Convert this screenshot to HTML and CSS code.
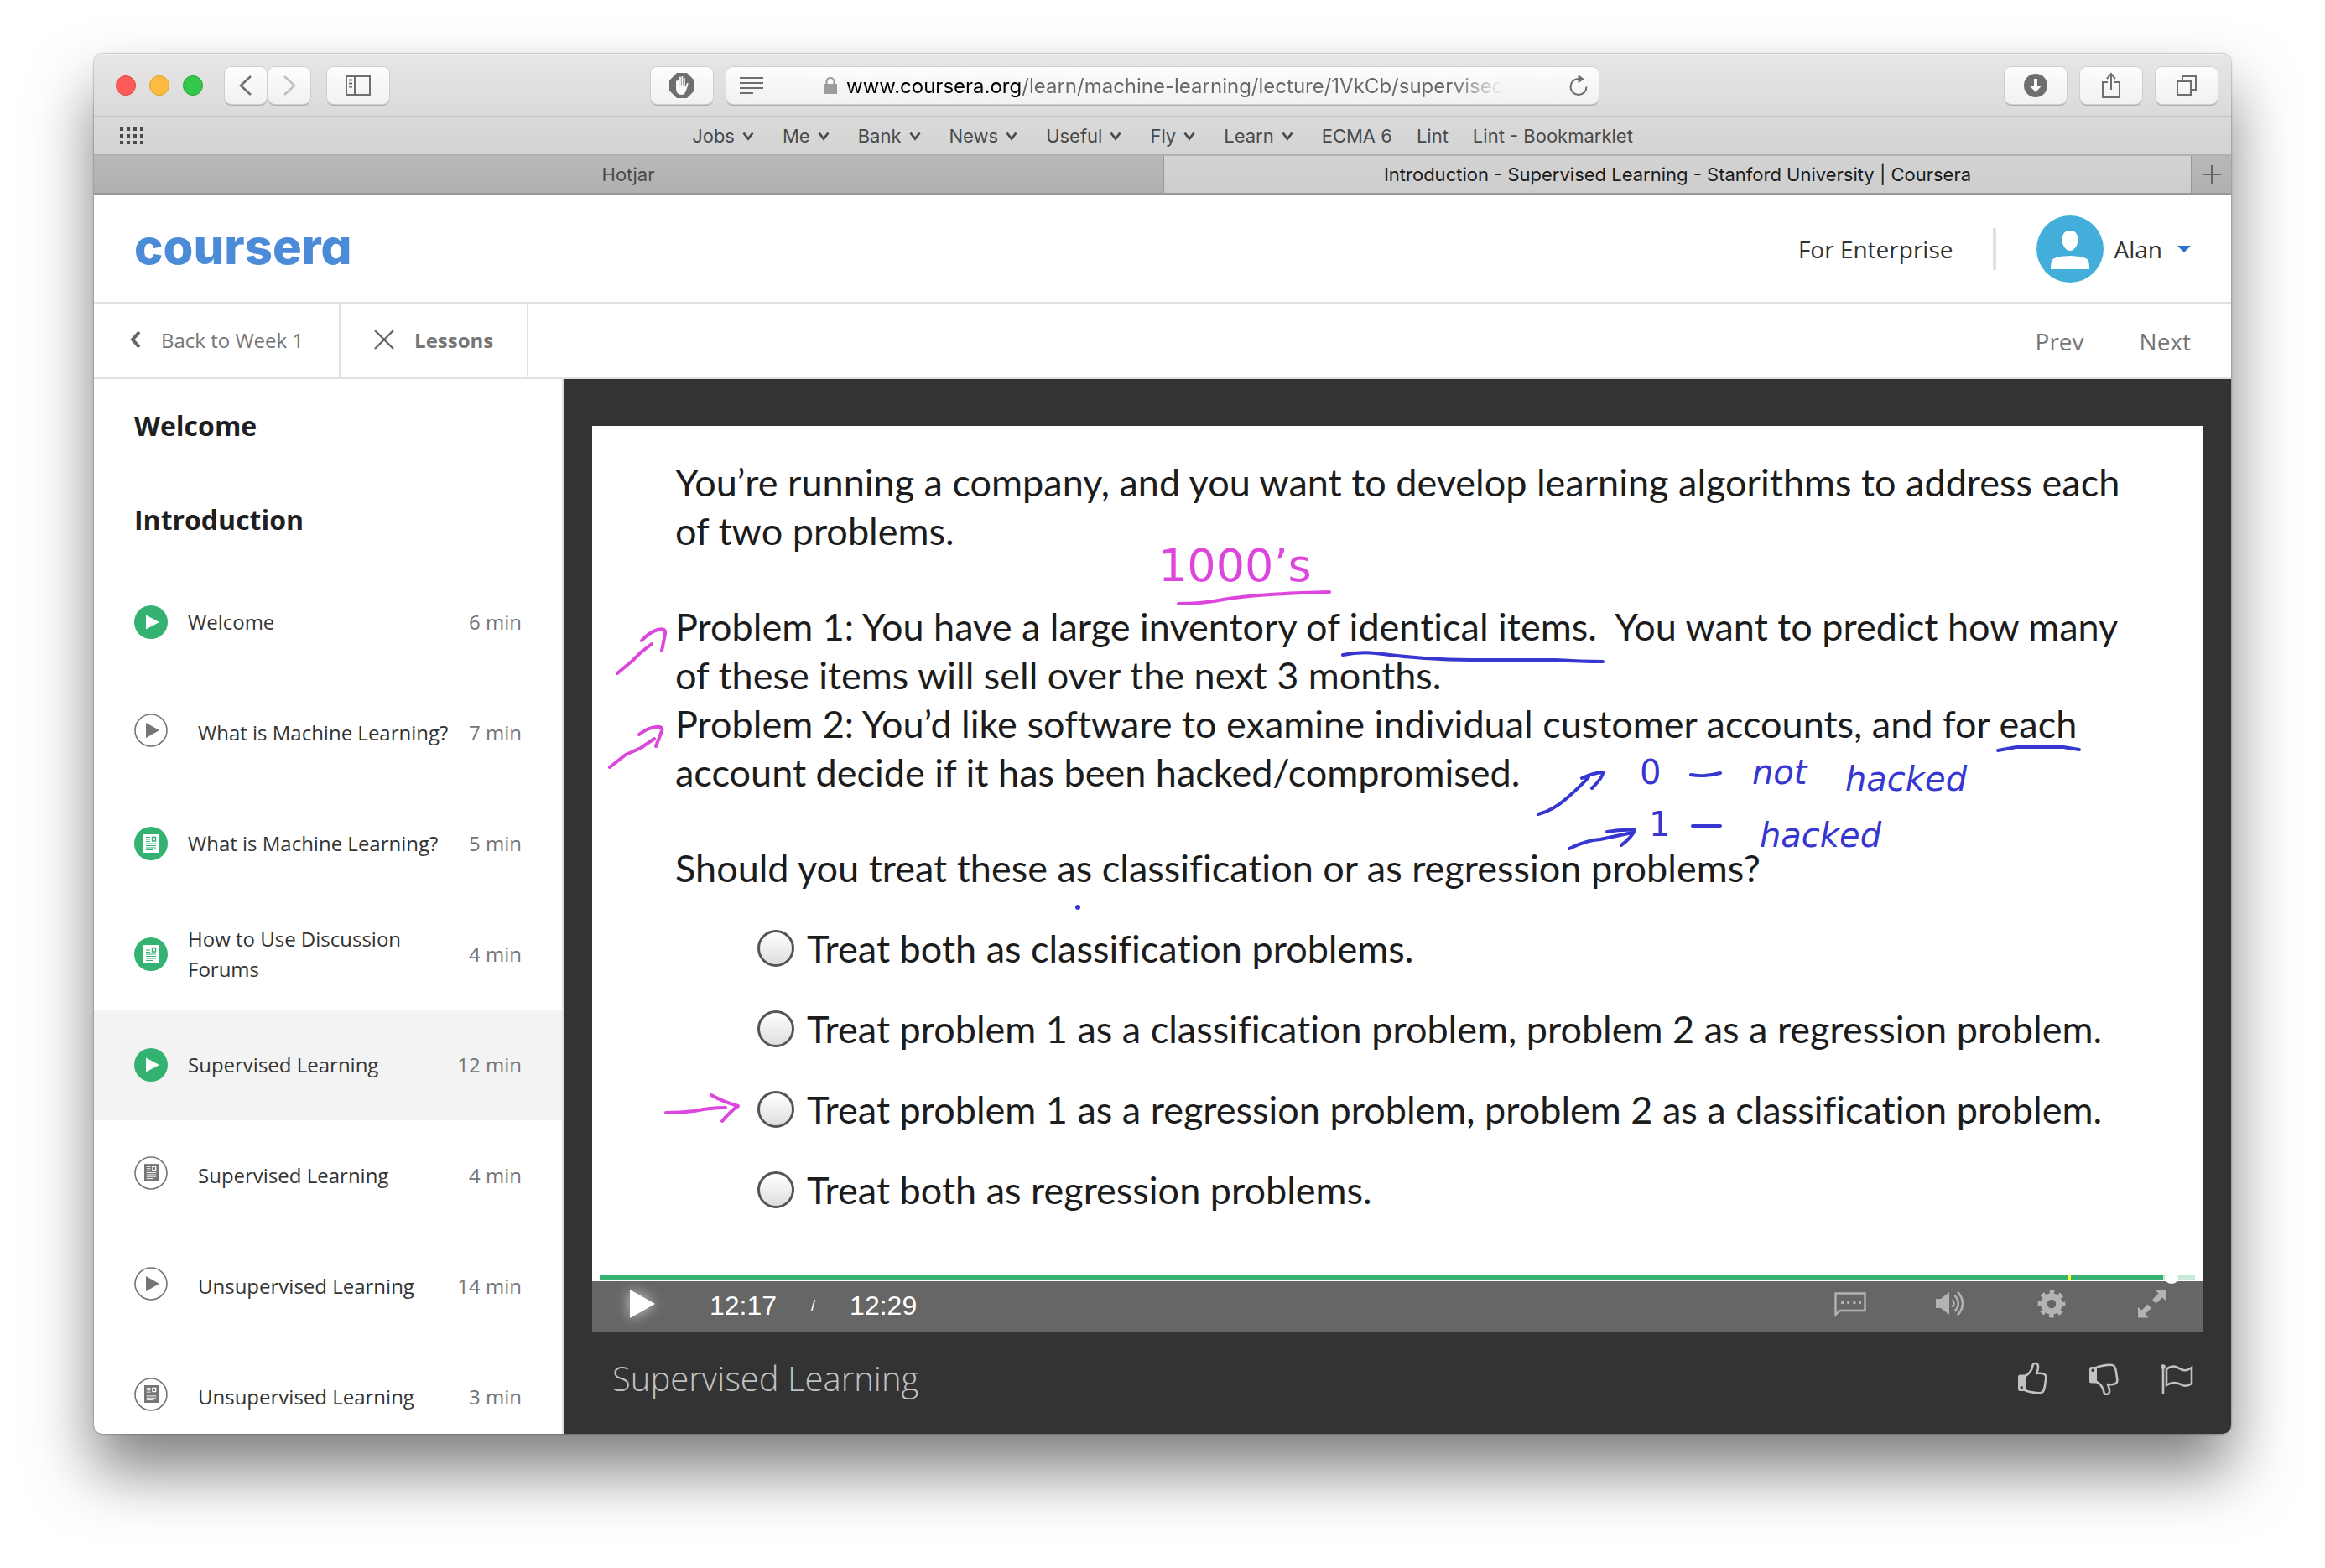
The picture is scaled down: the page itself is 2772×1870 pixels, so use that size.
FILE: index.html
```html
<!DOCTYPE html>
<html lang="en">
<head>
<meta charset="utf-8">
<meta name="viewport" content="width=device-width, initial-scale=1">
<title>Introduction - Supervised Learning - Stanford University | Coursera</title>
<link rel="stylesheet" href="styles.css">
</head>
<body>
<svg class="sprite" aria-hidden="true">
  <symbol id="chev" viewBox="0 0 14 12"><path d="M1.500 2.500L7 9.500L12.500 2.500" fill="none" stroke="currentColor" stroke-width="2.800"/></symbol>
  <symbol id="play-on" viewBox="0 0 40 40"><circle cx="20" cy="20" r="20" fill="#33b272"/><path d="M14 11.500L30 20L14 28.500z" fill="#fff"/></symbol>
  <symbol id="play-off" viewBox="0 0 40 40"><circle cx="20" cy="20" r="19" fill="none" stroke="#757575" stroke-width="1.600"/><path d="M14 11L30 20L14 29z" fill="#757575"/></symbol>
  <symbol id="page" viewBox="0 0 18 22">
    <path d="M0 0h18v22H0z" fill="currentColor"/>
    <path d="M3 3.500h5M3 6h5M3 8.500h5M3 11h12M3 13.500h12M3 16h12M3 18.500h9" stroke="var(--line)" stroke-width="1"/>
    <path d="M10.500 3.500h4v4.500h-4z" fill="none" stroke="var(--line)" stroke-width="1.400"/>
  </symbol>
  <symbol id="read-on" viewBox="0 0 40 40"><circle cx="20" cy="20" r="20" fill="#33b272"/><use href="#page" class="page-on" x="11" y="9" width="18" height="22"/></symbol>
  <symbol id="read-off" viewBox="0 0 40 40"><circle cx="20" cy="20" r="19" fill="none" stroke="#757575" stroke-width="1.600"/><use href="#page" class="page-off" x="12" y="9" width="17" height="21"/></symbol>
</svg>

<div class="window">
  <header class="toolbar">
    <div class="toolbar-left">
      <div class="lights">
        <button class="light close" aria-label="Close"></button>
        <button class="light minimise" aria-label="Minimise"></button>
        <button class="light zoom" aria-label="Zoom"></button>
      </div>
      <div class="history">
        <button class="tool narrow" aria-label="Back"><svg width="16" height="24" viewBox="0 0 16 24"><path d="M14 1L2 12L14 23" fill="none" stroke="#6e6e6e" stroke-width="2.600"/></svg></button>
        <button class="tool narrow" aria-label="Forward"><svg width="16" height="24" viewBox="0 0 16 24"><path d="M2 1L14 12L2 23" fill="none" stroke="#c0c0c0" stroke-width="2.600"/></svg></button>
      </div>
      <button class="tool" aria-label="Sidebar"><svg width="30" height="24" viewBox="0 0 30 24"><path d="M1 1h28v22H1zM11 1v22" fill="none" stroke="#6e6e6e" stroke-width="2"/><path d="M4 5.500h4M4 9.500h4M4 13.500h4" stroke="#6e6e6e" stroke-width="1.800"/></svg></button>
      <button class="tool blocker" aria-label="Content blocker"><svg width="30" height="30" viewBox="0 0 30 30"><path d="M9 0h12l9 9v12l-9 9H9l-9-9V9z" fill="#6e6e6e"/><path d="M9 9.500V18c0 5 2.500 8 6.500 8c3 0 4.500-2 5.500-5l2.500-7.500c.4-1.500-1.200-2-1.900-.6L19.800 17V7c0-1.200-1.600-1.200-1.700 0v7.500h-.7V5c0-1.300-1.800-1.300-1.800 0v9.500h-.7V5.500c0-1.300-1.800-1.300-1.800 0v9.500h-.7V9.500c0-1.200-1.700-1.200-1.700 0z" transform="translate(-1)" fill="#fafafa"/></svg></button>
    </div>
    <div class="address">
      <svg width="28" height="20" viewBox="0 0 28 20"><path d="M0 1h28M0 7h28M0 13h28M0 19h16" stroke="#6e6e6e" stroke-width="2"/></svg>
      <svg class="lock" width="18" height="20" viewBox="0 0 18 20"><path d="M1 8h16v12H1z" fill="#9c9c9c"/><path d="M4.500 9V5.500a4.500 4.500 0 0 1 9 0V9" fill="none" stroke="#9c9c9c" stroke-width="2.200"/></svg>
      <input class="url" type="text" aria-label="Address" value="www.coursera.org/learn/machine-learning/lecture/1VkCb/supervised-learning">
      <button class="plain" aria-label="Reload"><svg width="24" height="26" viewBox="0 0 24 26"><path d="M12 5A9.500 9.500 0 1 0 21.500 14.500" fill="none" stroke="#6e6e6e" stroke-width="2"/><path d="M11.500 0L19 5.500L11.500 10z" fill="#6e6e6e"/></svg></button>
    </div>
    <div class="toolbar-right">
      <button class="tool" aria-label="Downloads"><svg width="28" height="28" viewBox="0 0 28 28"><circle cx="14" cy="14" r="14" fill="#6e6e6e"/><path d="M14 6v10" stroke="#fafafa" stroke-width="4"/><path d="M7 14.500h14L14 22z" fill="#fafafa"/></svg></button>
      <button class="tool" aria-label="Share"><svg width="24" height="32" viewBox="0 0 24 32"><path d="M8 12H2v18h20V12h-6M12 21V3M7 8l5-6l5 6" fill="none" stroke="#6e6e6e" stroke-width="2"/></svg></button>
      <button class="tool" aria-label="Show all tabs"><svg width="26" height="26" viewBox="0 0 26 26"><path d="M2 8h16v16H2zM8 7V2h16v16h-5" fill="none" stroke="#6e6e6e" stroke-width="2"/></svg></button>
    </div>
  </header>

  <nav class="bookmarks" aria-label="Bookmarks">
    <button class="plain top-sites" aria-label="Top sites"><svg width="28" height="20" viewBox="0 0 28 20"><path d="M0 2h28M0 10h28M0 18h28" stroke="#4a4a4a" stroke-width="4" stroke-dasharray="4 4"/></svg></button>
    <div class="bookmark-list">
      <button class="plain folder">Jobs <svg width="14" height="12"><use href="#chev"/></svg></button>
      <button class="plain folder">Me <svg width="14" height="12"><use href="#chev"/></svg></button>
      <button class="plain folder">Bank <svg width="14" height="12"><use href="#chev"/></svg></button>
      <button class="plain folder">News <svg width="14" height="12"><use href="#chev"/></svg></button>
      <button class="plain folder">Useful <svg width="14" height="12"><use href="#chev"/></svg></button>
      <button class="plain folder">Fly <svg width="14" height="12"><use href="#chev"/></svg></button>
      <button class="plain folder">Learn <svg width="14" height="12"><use href="#chev"/></svg></button>
      <a class="bookmark" href="#">ECMA 6</a>
      <a class="bookmark" href="#">Lint</a>
      <a class="bookmark" href="#">Lint - Bookmarklet</a>
    </div>
  </nav>

  <div class="tabs">
    <a class="tab" href="#">Hotjar</a>
    <a class="tab current" href="#">Introduction - Supervised Learning - Stanford University | Coursera</a>
    <button class="new-tab" aria-label="New tab"><svg width="22" height="22" viewBox="0 0 22 22"><path d="M11 0v22M0 11h22" stroke="#666" stroke-width="2"/></svg></button>
  </div>

  <header class="site-header">
    <a class="logo" href="#">coursera</a>
    <div class="account">
      <a class="enterprise" href="#">For Enterprise</a>
      <button class="plain user">
        <svg width="80" height="80" viewBox="0 0 80 80"><circle cx="40" cy="40" r="40" fill="#42aed9"/><path d="M40 18c6.500 0 9.500 4.500 9.500 11S45 42 40 42s-9.500-6.500-9.500-13S33.500 18 40 18zM17 64c0-6 .5-10 2.500-12c3-2.500 11-3.500 20.500-4c9.500.5 17.500 1.500 20.500 4c2 2 2.500 6 2.500 12z" fill="#fff"/></svg>
        <span>Alan</span>
        <svg class="caret" width="16" height="8" viewBox="0 0 16 8"><path d="M0 0h16L8 8z" fill="#2a73cc"/></svg>
      </button>
    </div>
  </header>

  <nav class="subnav" aria-label="Lesson">
    <a class="subnav-item" href="#"><svg width="14" height="22" viewBox="0 0 14 22"><path d="M12 2L4 11L12 20" fill="none" stroke="#666" stroke-width="4"/></svg>Back to Week 1</a>
    <button class="subnav-item lessons"><svg width="24" height="24" viewBox="0 0 24 24"><path d="M1 1L23 23M23 1L1 23" stroke="#666" stroke-width="2.400"/></svg>Lessons</button>
    <div class="pager"><a href="#">Prev</a><a href="#">Next</a></div>
  </nav>

  <div class="course">
    <aside class="sidebar">
      <h2>Welcome</h2>
      <h2>Introduction</h2>
      <ul class="lessons-list">
        <li><a class="lesson" href="#"><svg class="mark"><use href="#play-on"/></svg><span class="name">Welcome</span><span class="time">6 min</span></a></li>
        <li><a class="lesson todo" href="#"><svg class="mark"><use href="#play-off"/></svg><span class="name">What is Machine Learning?</span><span class="time">7 min</span></a></li>
        <li><a class="lesson" href="#"><svg class="mark"><use href="#read-on"/></svg><span class="name">What is Machine Learning?</span><span class="time">5 min</span></a></li>
        <li><a class="lesson" href="#"><svg class="mark"><use href="#read-on"/></svg><span class="name">How to Use Discussion Forums</span><span class="time">4 min</span></a></li>
        <li><a class="lesson active" href="#"><svg class="mark"><use href="#play-on"/></svg><span class="name">Supervised Learning</span><span class="time">12 min</span></a></li>
        <li><a class="lesson todo" href="#"><svg class="mark"><use href="#read-off"/></svg><span class="name">Supervised Learning</span><span class="time">4 min</span></a></li>
        <li><a class="lesson todo" href="#"><svg class="mark"><use href="#play-off"/></svg><span class="name">Unsupervised Learning</span><span class="time">14 min</span></a></li>
        <li><a class="lesson todo" href="#"><svg class="mark"><use href="#read-off"/></svg><span class="name">Unsupervised Learning</span><span class="time">3 min</span></a></li>
      </ul>
    </aside>

    <main class="stage">
      <section class="player">
        <div class="slide">
          <p>You’re running a company, and you want to develop learning algorithms to address each<br>of two problems.</p>
          <p>Problem 1: You have a large inventory of identical items.&nbsp; You want to predict how many<br>of these items will sell over the next 3 months.<br>Problem 2: You’d like software to examine individual customer accounts, and for each<br>account decide if it has been hacked/compromised.</p>
          <p>Should you treat these as classification or as regression problems?</p>
          <div class="choices">
            <label class="choice"><input type="radio" name="answer">Treat both as classification problems.</label>
            <label class="choice"><input type="radio" name="answer">Treat problem 1 as a classification problem, problem 2 as a regression problem.</label>
            <label class="choice"><input type="radio" name="answer">Treat problem 1 as a regression problem, problem 2 as a classification problem.</label>
            <label class="choice"><input type="radio" name="answer">Treat both as regression problems.</label>
          </div>
          <svg class="ink" viewBox="0 0 1920 1080">
            <g class="pink">
              <path d="M30 295L48 280L58 270L71 260M59 256Q68 246 78 243Q88 240 87 248L83 268"/>
              <path d="M21 407L40 392L58 384L74 373M56 368Q66 360 76 359Q85 358 83 364L76 382"/>
              <path d="M699 212Q725 212 747 208Q790 200 879 198"/>
              <path d="M88 819Q105 819 122 817Q140 813 159 813M142 798Q156 806 174 811Q166 816 155 829"/>
              <text x="675" y="185">1000’s</text>
            </g>
            <g class="blue">
              <path d="M895 273Q915 269 934 271Q994 279 1048 279H1148Q1180 281 1205 281"/>
              <path d="M1676 387L1698 383H1754L1773 386"/>
              <path d="M1128 463Q1145 459 1162 444Q1180 428 1188 419M1180 420Q1193 414 1205 413Q1206 418 1192 432"/>
              <path d="M1165 504Q1185 494 1202 493L1240 485M1210 484Q1228 481 1243 482Q1240 490 1227 500"/>
              <path d="M1310 416Q1325 419 1345 414M1312 477H1345"/>
              <circle cx="579" cy="574" r="3"/>
              <text class="digit" x="1249" y="427">0</text>
              <text x="1383" y="427">not</text>
              <text x="1494" y="435">hacked</text>
              <text class="digit" x="1260" y="489">1</text>
              <text x="1392" y="502">hacked</text>
            </g>
          </svg>
        </div>
        <div class="progress">
          <input class="scrubber" type="range" min="0" max="749" value="741" aria-label="Seek">
          <span class="marker"></span>
        </div>
        <div class="controls">
          <button class="plain play" aria-label="Play"><svg width="30" height="34" viewBox="0 0 30 34"><path d="M0 0L30 17L0 34z" fill="#fff"/></svg></button>
          <div class="clock"><span>12:17</span><span class="slash">/</span><span>12:29</span></div>
          <div class="options">
            <button class="plain" aria-label="Captions"><svg width="38" height="34" viewBox="0 0 38 34"><path d="M1.500 4.500h35v20.500H6.500L1.500 30z" fill="none" stroke="#b3b3b3" stroke-width="2.400"/><path d="M8 15.500h24" stroke="#b3b3b3" stroke-width="3.200" stroke-dasharray="3 4.200"/></svg></button>
            <button class="plain" aria-label="Volume"><svg width="38" height="34" viewBox="0 0 38 34"><path d="M1 11h6l10-8v27l-10-8H1z" fill="#b3b3b3"/><path d="M20.500 12q4 4.500 0 9M23.500 7q8.500 9.500 0 19M27 2.500q12 14 0 28" fill="none" stroke="#b3b3b3" stroke-width="2.600"/></svg></button>
            <button class="plain" aria-label="Settings"><svg width="38" height="34" viewBox="0 0 38 34"><circle cx="19" cy="17" r="9" fill="none" stroke="#b3b3b3" stroke-width="7.500"/><circle cx="19" cy="17" r="14.200" fill="none" stroke="#b3b3b3" stroke-width="4.500" stroke-dasharray="5.576 5.576" stroke-dashoffset="2.788"/></svg></button>
            <button class="plain" aria-label="Full screen"><svg width="38" height="34" viewBox="0 0 38 34"><path d="M23 1h11q1 0 1 1v11l-4-3.500l-7.500 7l-4.500-4.500l7.500-7.500zM2 21l4.500 3.500l7-7l4.500 4.500l-7.500 7l4 4.500H3q-1 0-1-1z" fill="#b3b3b3"/></svg></button>
          </div>
        </div>
      </section>
      <footer class="caption">
        <h1>Supervised Learning</h1>
        <div class="feedback">
          <button class="plain" aria-label="Like"><svg width="40" height="40" viewBox="0 0 40 40"><g id="thumb"><path d="M8 17.500C13 15 17 9.500 17.500 4.500C18 1 23 1.200 24 5C24.500 9 23.500 11 22 14C27 13.500 32 14 33 17C34 19 33 22 32.500 25C32 30 31 34 29.500 36C26 38.500 14 36.500 8 34" fill="none" stroke="#c2c2c2" stroke-width="2.600" stroke-linejoin="round"/><path d="M2.500 15.500H9V35H2.500Q0 35 0 32.500V18Q0 15.500 2.500 15.500z" fill="#c2c2c2"/><circle cx="4.200" cy="30.800" r="1.700" fill="#333"/></g></svg></button>
          <button class="plain" aria-label="Dislike"><svg width="40" height="40" viewBox="0 0 40 40"><use href="#thumb" transform="matrix(1 0 0 -1 0 41)"/></svg></button>
          <button class="plain" aria-label="Report a problem"><svg width="40" height="40" viewBox="0 0 40 40"><path d="M3 5v33M7 9C14 3 19 6 24 9C30 12 34 9 37 7V26C33 29 29 30 24 27C18 24 13 24 7 28z" fill="none" stroke="#c2c2c2" stroke-width="2.600"/><circle cx="3" cy="6" r="2.800" fill="#c2c2c2"/></svg></button>
        </div>
      </footer>
    </main>
  </div>
</div>
</body>
</html>
```
FILE: styles.css
```css
* {
  box-sizing: border-box;
}

body {
  margin: 0;
  padding: 64px 112px 160px;
  background: #fff;
  color: #333;
  font-family: "Open Sans", "Noto Sans", sans-serif;
  font-size: 24px;
}

h1,
h2,
p,
ul {
  margin: 0;
  padding: 0;
}

ul {
  list-style: none;
}

a {
  color: inherit;
  text-decoration: none;
}

button {
  padding: 0;
  border: 0;
  color: inherit;
  font: inherit;
}

svg {
  display: block;
  flex: none;
}

.sprite {
  position: absolute;
  width: 0;
  height: 0;
}

.page-on {
  --line: #33b272;
  color: #fff;
}

.page-off {
  --line: #fff;
  color: #757575;
}

.plain {
  background: none;
}

.window {
  overflow: hidden;
  border-radius: 10px;
  background: #fff;
  box-shadow: 0 0 2px rgba(0, 0, 0, 0.6), 0 44px 76px rgba(0, 0, 0, 0.5);
}

/* Browser toolbar */
.toolbar {
  display: grid;
  grid-template-columns: 1fr minmax(0, 1040px) 1fr;
  gap: 16px;
  align-items: center;
  height: 76px;
  padding: 0 16px;
  border-top: 2px solid #f3f3f3;
  border-bottom: 2px solid #c2c2c2;
  background: linear-gradient(#e6e6e6, #dadada);
}

.toolbar-left,
.toolbar-right,
.lights,
.history {
  display: flex;
  align-items: center;
}

.toolbar-left {
  gap: 20px;
  padding-left: 10px;
}

.toolbar-right {
  gap: 16px;
  justify-content: flex-end;
}

.lights {
  gap: 16px;
  margin-right: 6px;
}

.history {
  gap: 2px;
}

.light {
  width: 24px;
  height: 24px;
  border: 1px solid;
  border-radius: 50%;
}

.close {
  border-color: #e2443f;
  background: #fc5b57;
}

.minimise {
  border-color: #dfa023;
  background: #fdbc40;
}

.zoom {
  border-color: #1fa730;
  background: #34c84a;
}

.tool,
.address {
  display: flex;
  align-items: center;
  height: 44px;
  border-radius: 8px;
  background: linear-gradient(#fdfdfd, #f1f1f1);
  box-shadow: 0 0 0 1px #cfcfcf, 0 2px 1px #a8a8a8;
}

.tool {
  justify-content: center;
  width: 74px;
}

.narrow {
  width: 50px;
}

.blocker {
  margin-left: auto;
}

.address {
  padding: 0 12px 0 16px;
}

.lock {
  margin: 0 10px 0 71px;
}

.url {
  flex: 1;
  min-width: 0;
  height: 44px;
  margin-right: 78px;
  padding: 0;
  border: 0;
  outline: 0;
  background: linear-gradient(90deg, #000 208px, #666 208px, #666 720px, transparent 784px);
  -webkit-background-clip: text;
  background-clip: text;
  -webkit-text-fill-color: transparent;
  font: 24px Inter, sans-serif;
}

/* Bookmarks bar */
.bookmarks {
  display: grid;
  grid-template-columns: 1fr auto 1fr;
  align-items: center;
  height: 46px;
  padding: 0 31px;
  border-bottom: 2px solid #b0b0b0;
  background: linear-gradient(#dadada, #d3d3d3);
  color: #4a4a4a;
  font: 22px Inter, sans-serif;
}

.bookmark-list {
  display: flex;
  gap: 29px;
}

.folder {
  display: flex;
  gap: 9px;
  align-items: center;
  margin-right: 5px;
}

/* Tabs */
.tabs {
  display: flex;
  height: 46px;
  border-bottom: 2px solid #989898;
  background: linear-gradient(#b8b8b8, #b0b0b0);
  color: #4a4a4a;
  font: 22px Inter, sans-serif;
}

.tab {
  flex: 0 0 50%;
  line-height: 44px;
  text-align: center;
}

.current {
  flex: 1;
  border: solid #989898;
  border-width: 0 2px;
  background: linear-gradient(#d3d3d3, #cdcdcd);
  color: #1a1a1a;
}

.new-tab {
  display: flex;
  align-items: center;
  justify-content: center;
  width: 46px;
  background: none;
}

/* Course site header */
.site-header {
  display: flex;
  align-items: center;
  justify-content: space-between;
  height: 130px;
  padding: 2px 48px 0;
  border-bottom: 2px solid #e1e1e1;
  font-size: 28px;
}

.logo {
  padding-bottom: 6px;
  color: #4c8bd8;
  font: 800 58px Inter, sans-serif;
  font-feature-settings: "cv11";
}

.account,
.user {
  display: flex;
  align-items: center;
}

.enterprise {
  padding-right: 48px;
  border-right: 4px solid #e1e1e1;
  line-height: 50px;
}

.user {
  gap: 12px;
  margin-left: 48px;
}

.caret {
  margin-left: 6px;
}

/* Lesson navigation */
.subnav {
  display: flex;
  height: 90px;
  border-bottom: 2px solid #e1e1e1;
  color: #757575;
}

.subnav-item {
  display: flex;
  gap: 24px;
  align-items: center;
  padding: 0 42px 2px;
  border-right: 2px solid #e1e1e1;
  background: none;
}

.lessons {
  padding: 0 40px 2px;
  font-weight: 700;
}

.pager {
  display: flex;
  gap: 66px;
  align-items: center;
  margin-left: auto;
  padding: 2px 48px 0 0;
  font-size: 28px;
}

.course {
  display: grid;
  grid-template-columns: 560px minmax(0, 1fr);
}

.sidebar {
  contain: size;
  overflow: hidden;
  border-right: 2px solid #e1e1e1;
}

.sidebar h2 {
  padding: 34px 48px;
  color: #1f1f1f;
  font-size: 32px;
  font-weight: 700;
  line-height: 44px;
}

.lesson {
  display: flex;
  gap: 24px;
  align-items: center;
  height: 132px;
  padding: 0 48px;
  line-height: 36px;
}

.active {
  background: #f3f3f3;
}

.mark {
  width: 40px;
  height: 40px;
}

.todo .mark {
  margin: 0 12px 6px 0;
}

.name {
  flex: 1;
}

.time {
  color: #757575;
  white-space: nowrap;
}

.todo .name {
  margin-right: -24px;
}

/* Video */
.stage {
  padding: 56px 34px 0;
  background: #333;
}

.player {
  display: flex;
  flex-direction: column;
  aspect-ratio: 1920 / 1080;
  background: #fff;
}

.slide {
  position: relative;
  flex: 1;
  padding: 38px 20px 0 99px;
  color: #1c1c1c;
  font: 45px Lato, sans-serif;
  font-variant-ligatures: none;
  line-height: 58px;
}

.slide p {
  margin-bottom: 56px;
  white-space: nowrap;
}

.choices {
  display: grid;
  margin: -37px 0 0 98px;
}

.choice {
  display: flex;
  gap: 15px;
  align-items: center;
  height: 96px;
  white-space: nowrap;
}

.choice input {
  appearance: none;
  width: 44px;
  height: 44px;
  margin: 0;
  border: 3px solid #555;
  border-radius: 50%;
  background: linear-gradient(#fff, #dedede);
}

.ink {
  position: absolute;
  top: 0;
  left: 0;
  width: 100%;
  aspect-ratio: 1920 / 1080;
  pointer-events: none;
}

.ink path {
  fill: none;
  stroke: currentColor;
  stroke-width: 4;
  stroke-linecap: round;
  stroke-linejoin: round;
}

.ink text,
.ink circle {
  fill: currentColor;
}

.pink {
  color: #dc46dc;
  font: 54px "DejaVu Sans", sans-serif;
}

.blue {
  color: #3636d0;
  font: italic 40px "DejaVu Sans", sans-serif;
}

.digit {
  font-style: normal;
}

.progress {
  position: relative;
  display: flex;
  margin: 0 9px 1px;
}

.scrubber {
  appearance: none;
  width: 100%;
  height: 6px;
  margin: 0;
  background: linear-gradient(90deg, #33b272 98%, #c8e8d9 98%);
}

.scrubber::-webkit-slider-thumb {
  appearance: none;
  width: 16px;
  height: 14px;
  border-radius: 50%;
  background: #fff;
}

.marker {
  position: absolute;
  top: 0;
  left: 92%;
  width: 4px;
  height: 6px;
  background: #ffff2e;
}

.controls {
  display: flex;
  align-items: center;
  height: 60px;
  padding: 0 41px 6px 45px;
  background: #666;
}

.play {
  filter: drop-shadow(0 0 8px rgba(255, 255, 255, 0.7));
}

.clock {
  display: flex;
  gap: 41px;
  align-items: center;
  margin-left: 65px;
  padding-top: 4px;
  color: #fff;
  font: 32px "Liberation Sans", sans-serif;
}

.slash {
  font-size: 18px;
}

.options {
  display: flex;
  gap: 82px;
  margin-left: auto;
}

.caption {
  display: flex;
  align-items: center;
  justify-content: space-between;
  padding: 28px 10px 38px 24px;
}

.caption h1 {
  color: #c2c2c2;
  font-size: 40px;
  font-weight: 300;
  line-height: 56px;
}

.feedback {
  display: flex;
  gap: 45px;
}
```
